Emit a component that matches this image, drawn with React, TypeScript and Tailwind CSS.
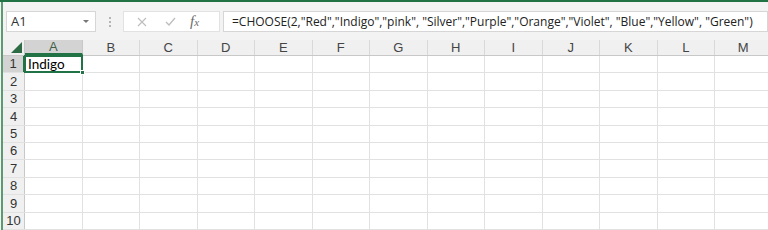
const cols = ["A", "B", "C", "D", "E", "F", "G", "H", "I", "J", "K", "L", "M"];
const rows = [1, 2, 3, 4, 5, 6, 7, 8, 9, 10];

const formula =
  '=CHOOSE(2,"Red","Indigo","pink", "Silver","Purple","Orange","Violet", "Blue","Yellow", "Green")';

const App = () => {
  return (
    <div className="w-[768px] h-[230px] overflow-hidden bg-[#f3f3f3] border-t-2 border-[#217346] font-['Open_Sans',sans-serif]">
      <div className="h-full ml-px border-l-2 border-[#5c9a72] flex flex-col">
        {/* formula bar */}
        <div className="h-[38px] shrink-0 flex items-center pt-px">
          <div className="shrink-0 ml-[3px] w-[90px] h-[21px] bg-white border border-[#d6d6d6] flex items-center justify-between pl-[4px] pr-[6px]">
            <span className="text-[13px] text-[#333]">A1</span>
            <span className="w-0 h-0 border-l-[3px] border-r-[3px] border-t-[3px] border-l-transparent border-r-transparent border-t-[#777]" />
          </div>
          <div className="shrink-0 w-[27px] flex flex-col items-center gap-[2px]">
            <span className="w-[2px] h-[2px] bg-[#b5b5b5]" />
            <span className="w-[2px] h-[2px] bg-[#b5b5b5]" />
            <span className="w-[2px] h-[2px] bg-[#b5b5b5]" />
          </div>
          <div className="shrink-0 w-[97px] h-[21px] bg-white border border-[#e2e2e2] flex items-center">
            <svg className="ml-[13px]" width="10" height="10" viewBox="0 0 10 10">
              <path d="M1 1 L9 9 M9 1 L1 9" stroke="#bdbdbd" strokeWidth="1.1" fill="none" />
            </svg>
            <svg className="ml-[18px]" width="11" height="9" viewBox="0 0 11 9">
              <path d="M1 5 L4 8 L10 1" stroke="#bdbdbd" strokeWidth="1.3" fill="none" />
            </svg>
            <span className="ml-[14px] font-['Liberation_Serif',serif] italic text-[15px] text-[#6b6b6b] leading-none">
              f<span className="text-[11px]">x</span>
            </span>
          </div>
          <div className="ml-[3px] flex-1 h-[21px] bg-white border border-[#d6d6d6] flex items-center pl-[8px]">
            <span className="text-[12px] text-[#222] whitespace-nowrap">{formula}</span>
          </div>
        </div>

        {/* sheet */}
        <div className="flex-1 bg-white font-['Liberation_Sans',sans-serif]">
          <div className="flex h-[16px] bg-[#f0f0f0] border-b border-[#c8c8c8]">
            <div className="w-[22px] shrink-0 relative border-r border-[#c8c8c8]">
              <div className="absolute right-[2px] bottom-[2px] w-0 h-0 border-l-[11px] border-l-transparent border-b-[11px] border-b-[#2d6b45]" />
            </div>
            {cols.map((c) => (
              <div
                key={c}
                className={
                  c === "A"
                    ? "w-[57.5px] shrink-0 flex items-center justify-center text-[13px] text-[#3f5f48] bg-[#d3d3d3] border-b-2 border-[#217346] border-r border-r-[#c8c8c8]"
                    : "w-[57.5px] shrink-0 flex items-center justify-center text-[13px] text-[#444] border-r border-[#d8d8d8]"
                }
              >
                {c}
              </div>
            ))}
          </div>
          {rows.map((r) => (
            <div key={r} className="flex h-[17.4px] border-b border-[#e1e1e1]">
              <div
                className={
                  r === 1
                    ? "w-[22px] shrink-0 flex items-center justify-center text-[13px] text-[#333] bg-[#d3d3d3] border-r-2 border-[#217346]"
                    : "w-[22px] shrink-0 flex items-center justify-center text-[13px] text-[#333] bg-[#f0f0f0] border-r border-[#c8c8c8]"
                }
              >
                {r}
              </div>
              {cols.map((c) => (
                <div key={c} className="w-[57.5px] shrink-0 border-r border-[#e1e1e1] relative">
                  {r === 1 && c === "A" && (
                    <div className="absolute -left-px -top-px -right-px -bottom-px border-2 border-[#217346] flex items-center pl-[2px] text-[13.5px] text-black font-['Lato',sans-serif] z-10">
                      Indigo
                      <span className="absolute -right-[4px] -bottom-[4px] w-[5px] h-[5px] bg-[#217346] border border-white" />
                    </div>
                  )}
                </div>
              ))}
            </div>
          ))}
        </div>
      </div>
    </div>
  );
};

export default App;
